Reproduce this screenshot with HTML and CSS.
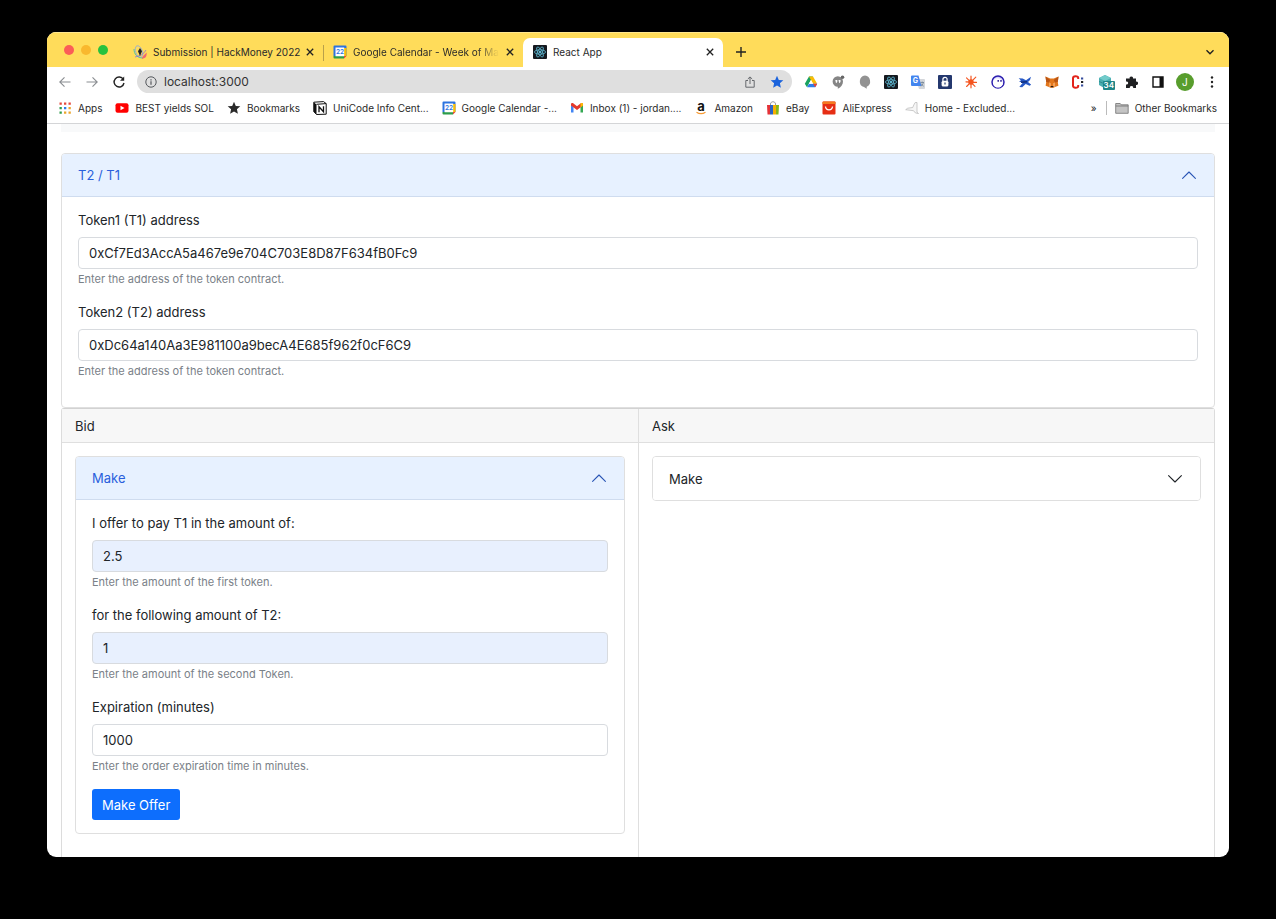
FILE: index.html
```
<!DOCTYPE html>
<html lang="en">
<head>
<meta charset="utf-8">
<title>React App</title>
<link rel="stylesheet" href="styles.css">
</head>
<body>
<svg class="defs" aria-hidden="true">
  <symbol id="close" viewBox="0 0 10 10"><path d="M1.8 1.8l6.4 6.4M8.2 1.8L1.8 8.2" stroke="#222" stroke-width="1.3" fill="none"/></symbol>
  <symbol id="react" viewBox="0 0 14 14">
    <rect width="14" height="14" rx="1" fill="#15191f"/>
    <g fill="none" stroke="#5fb9d3" stroke-width=".8"><ellipse cx="7" cy="7" rx="5.600" ry="2.200"/><ellipse cx="7" cy="7" rx="5.600" ry="2.200" transform="rotate(60 7 7)"/><ellipse cx="7" cy="7" rx="5.600" ry="2.200" transform="rotate(120 7 7)"/></g>
    <circle cx="7" cy="7" r="1.200" fill="#5fb9d3"/>
  </symbol>
  <symbol id="chevron" viewBox="0 0 16 16"><path d="M1.600 4.600L8 11l6.400-6.400" fill="none" stroke="currentColor" stroke-width="1.100" stroke-linecap="round" stroke-linejoin="round"/></symbol>
  <symbol id="star" viewBox="0 0 14 14"><path d="M7 .8l1.800 4.100 4.500.4-3.400 3 1 4.400L7 10.400l-3.900 2.300 1-4.400-3.400-3 4.500-.4z" fill="currentColor"/></symbol>
</svg>

<div class="window">
  <header class="tabstrip">
    <div class="lights"><button class="light red" aria-label="Close window"></button><button class="light amber" aria-label="Minimize"></button><button class="light green" aria-label="Zoom"></button></div>
    <div class="tab tab-first">
      <svg class="icon" viewBox="0 0 14 14"><g fill="none"><ellipse cx="6" cy="6.500" rx="3.300" ry="6" stroke="#8fa9dd" stroke-width=".8" transform="rotate(-20 6 6.500)"/><path d="M1 4c0 5 3 9 9 9" stroke="#5cc0a0" stroke-width="1"/><path d="M2 12c5-1 9-3 11-7" stroke="#8f6fd0" stroke-width=".8"/><path d="M9 13c2 0 4-1 4-4l-3 3" stroke="#f06a70" stroke-width="1.300"/></g><path d="M7 3l2 3.300L7 11 5 6.300z" fill="#222"/></svg>
      <span class="tab-title">Submission | HackMoney 2022</span>
      <button class="bare" aria-label="Close tab"><svg class="x"><use href="#close"/></svg></button>
    </div>
    <div class="tab tab-second">
      <svg class="icon" viewBox="0 0 14 14">
        <path d="M1.500 .5h11a1 1 0 0 1 1 1V11H.5V1.500a1 1 0 0 1 1-1z" fill="#2c73e0"/>
        <path d="M11 3h2.500v8H11z" fill="#fbbc04"/><path d="M.5 11H11v2.500H1.500a1 1 0 0 1-1-1z" fill="#2c9c4b"/>
        <path d="M11 11h2.500L11 13.500z" fill="#ea4335"/><path d="M2.500 2.500h8.700v8.700H2.500z" fill="#fff"/>
        <text x="7" y="9.300" text-anchor="middle" font-size="6.500" font-weight="600" fill="#2c73e0">22</text>
      </svg>
      <span class="tab-title fade">Google Calendar - Week of Ma</span>
      <button class="bare" aria-label="Close tab"><svg class="x"><use href="#close"/></svg></button>
    </div>
    <div class="tab tab-active">
      <svg class="icon"><use href="#react"/></svg>
      <span class="tab-title">React App</span>
      <button class="bare" aria-label="Close tab"><svg class="x"><use href="#close"/></svg></button>
    </div>
    <button class="bare new-tab" aria-label="New tab"><svg class="icon" viewBox="0 0 14 14"><path d="M7 2v10M2 7h10" stroke="#222" stroke-width="1.400"/></svg></button>
    <button class="bare tab-search" aria-label="Search tabs"><svg class="x" viewBox="0 0 10 10"><path d="M1.500 3.300L5 6.800l3.500-3.500" stroke="#222" stroke-width="1.400" fill="none"/></svg></button>
  </header>

  <div class="toolbar">
    <div class="nav">
      <button class="bare" aria-label="Back"><svg class="icon" viewBox="0 0 14 14"><path d="M12.500 7H2M6.500 2.300L1.800 7l4.700 4.700" stroke="#8a8d91" stroke-width="1.100" fill="none"/></svg></button>
      <button class="bare" aria-label="Forward"><svg class="icon" viewBox="0 0 14 14"><path d="M1.500 7H12M7.500 2.300L12.200 7l-4.700 4.700" stroke="#8a8d91" stroke-width="1.100" fill="none"/></svg></button>
      <button class="bare" aria-label="Reload"><svg class="icon" viewBox="0 0 14 14"><path d="M11.300 4.300A5 5 0 1 0 12 8" stroke="#222" stroke-width="1.400" fill="none"/><path d="M12.200 1.500v4.200H8z" fill="#222"/></svg></button>
    </div>
    <div class="omnibox">
      <svg class="info" viewBox="0 0 12 12"><circle cx="6" cy="6" r="5.200" fill="none" stroke="#55585c"/><path d="M6 5.300v3.400M6 3.200v1.200" stroke="#55585c" stroke-width="1.200"/></svg>
      <input class="url" type="text" aria-label="Address" value="localhost:3000">
      <button class="bare" aria-label="Share"><svg class="info" viewBox="0 0 12 12"><path d="M4 4.500H1.800v6.700h8.400V4.500H8M6 8V1M3.800 3L6 .9 8.200 3" fill="none" stroke="#66696d" stroke-width="1"/></svg></button>
      <button class="bare star-on" aria-label="Edit bookmark"><svg class="icon"><use href="#star"/></svg></button>
    </div>
    <div class="extensions">
      <button class="bare" aria-label="Drive"><svg class="icon" viewBox="0 0 14 14"><path d="M5 1.500h4L4.500 9.300 3 12.200.8 8.700z" fill="#1aa260"/><path d="M5 1.500h4l4.200 7.200H9z" fill="#fbbc04"/><path d="M3 12.200L5 8.700h8.200l-2 3.500z" fill="#2f7de9"/><path d="M7 5L4.900 8.700h4.200z" fill="#fff"/><path d="M13.200 8.700l-2 3.500-2.100-3.500z" fill="#ea4335"/></svg></button>
      <button class="bare" aria-label="Hangouts"><svg class="icon" viewBox="0 0 14 14"><path d="M6.800 1.300a5.200 5.200 0 0 0 0 10.400V13.700c3.200-1.500 5.200-4 5.200-7.200a5.200 5.200 0 0 0-5.200-5.200z" fill="#858585"/><path d="M4.300 5h2v1.900L5 8.200zm3.200 0h2v1.900L8.200 8.200z" fill="#fff"/><circle cx="11.500" cy="2.300" r="1.800" fill="#666"/></svg></button>
      <button class="bare" aria-label="Comments"><svg class="icon" viewBox="0 0 14 14"><path d="M7 .6a5.900 5.900 0 0 0-1 11.500l2.700 1.700v-2A5.900 5.900 0 0 0 7 .6z" fill="#929292"/></svg></button>
      <button class="bare" aria-label="React tools"><svg class="icon"><use href="#react"/></svg></button>
      <button class="bare" aria-label="Translate"><svg class="icon" viewBox="0 0 14 14"><path d="M5 4h8a1 1 0 0 1 1 1v8a1 1 0 0 1-1 1H8z" fill="#d3d6da"/><path d="M1 .5h6.500L10.500 11H1a1 1 0 0 1-1-1V1.500a1 1 0 0 1 1-1z" fill="#4385ef"/><path d="M9.500 7.500h3.500M11.200 6.500v1M12.400 7.500c-.5 2-1.500 3-2.600 3.700M10 8.500c.6 1.300 1.500 2 2.700 2.700" stroke="#66788a" stroke-width=".7" fill="none"/><text x="4.300" y="8.300" text-anchor="middle" font-size="7" font-weight="700" fill="#fff">G</text></svg></button>
      <button class="bare" aria-label="Password lock"><svg class="icon" viewBox="0 0 14 14"><rect width="14" height="14" rx="1" fill="#24386e"/><path d="M4.900 6V4.400a2.100 2.100 0 0 1 4.200 0V6" fill="none" stroke="#fff" stroke-width="1.200"/><rect x="3.600" y="5.700" width="6.800" height="5.800" rx="1.500" fill="#fff"/><path d="M7 7.500v2" stroke="#24386e" stroke-width="1.200"/></svg></button>
      <button class="bare" aria-label="Spark"><svg class="icon" viewBox="0 0 14 14"><g stroke="#f4551f" stroke-linecap="round"><path d="M7 1.200v11.600M2 6.800l10.500.6" stroke-width="1.200"/><path d="M2.500 2.800l8.500 8.500M11.800 2.200l-9.200 9.300" stroke-width="1.100"/></g><circle cx="7" cy="7" r="2.700" fill="#f4551f"/></svg></button>
      <button class="bare" aria-label="Ghost"><svg class="icon" viewBox="0 0 14 14"><circle cx="7" cy="7" r="6" fill="#d9d4ff" stroke="#2c1fae" stroke-width="1.500"/><path d="M2 8.500C1.500 5 4 3 7 3.200s5.300 3 4.800 6C11 11.500 9 12.600 7 12.600S2.500 11.500 2 8.500z" fill="#fff"/><path d="M7.200 5v1.800M10 5v1.800" stroke="#271b93" stroke-width="1.400"/></svg></button>
      <button class="bare" aria-label="Plane"><svg class="icon" viewBox="0 0 14 14"><path d="M.7 3.200l4 .3L8 5.300 13 1.700l-1 3.200-2 2 3.200 2.800-1.700 1L7.700 9l-3.500 3.300-2.900-.2L4.600 8 1 6.200l2-.8z" fill="#2758c5"/><path d="M3 7.200l6-.4" stroke="#102c79" stroke-width="1.500"/></svg></button>
      <button class="bare" aria-label="Fox wallet"><svg class="icon" viewBox="0 0 14 14"><path d="M.5 1.500l4.700 2h3.600l4.700-2-.7 5.500.6 3.700-3.400 1.300-1.300.8H5.300L4 12 .6 10.700 1.200 7z" fill="#e2761b"/><path d="M.5 1.500L5.200 5 4 7.500 1.200 7zm13 0L8.800 5 10 7.500l2.800-.5z" fill="#b85515"/><path d="M4 7.500l2 .8v3l-2 .7zm6 0l-2 .8v3l2 .7z" fill="#f4a25a"/><path d="M5.700 11h2.600v1.300H5.700z" fill="#2b1b12"/></svg></button>
      <button class="bare" aria-label="C tools"><svg class="icon" viewBox="0 0 14 14"><path d="M7.200 4V2.800C7.200.8 2 .8 2 3.300v7.400c0 2.500 5.200 2.500 5.200.5V10" fill="none" stroke="#e2231a" stroke-width="2"/><path d="M10 2.500h2.200v2H10zM10 9.500h2.200v2H10z" fill="#334b9b"/><path d="M10 6h2.200v2H10z" fill="#222"/></svg></button>
      <button class="bare badge-host" aria-label="Tracker, 34"><svg class="icon" viewBox="0 0 14 14"><path d="M7 0l6 3v7l-6 3.500L1 10V3z" fill="#49aeb1"/><path d="M1 3l6 3 6-3-6-3z" fill="#72cbca"/><path d="M1 6.500L7 9l6-2.500" stroke="#2e8b8e" fill="none"/></svg><span class="badge">34</span></button>
      <button class="bare" aria-label="Extensions"><svg class="icon" viewBox="0 0 14 14"><path d="M1 3.500h3.700a1.700 1.700 0 1 1 3.300 0h3v3.200a1.700 1.700 0 1 1 0 3.300v3H8.200a1.700 1.700 0 1 0-3.300 0H1V9.500a1.600 1.600 0 1 0 0-3z" fill="#1f2022"/></svg></button>
      <button class="bare" aria-label="Side panel"><svg class="icon" viewBox="0 0 14 14"><path d="M2 2h10v10H2z" fill="#fff" stroke="#111" stroke-width="1.400"/><path d="M8.500 2H12v10H8.500z" fill="#111"/></svg></button>
      <button class="bare" aria-label="Profile"><span class="avatar">J</span></button>
      <button class="bare" aria-label="Menu"><svg class="icon" viewBox="0 0 14 14"><g fill="#222"><circle cx="7" cy="2.500" r="1.200"/><circle cx="7" cy="7" r="1.200"/><circle cx="7" cy="11.500" r="1.200"/></g></svg></button>
    </div>
  </div>

  <nav class="bookmarks">
    <a href="#"><svg class="icon" viewBox="0 0 14 14"><g fill="#e5483b"><path d="M1.500 1.500h2.300v2.300H1.500zM6 1.500h2.300v2.300H6zM10.500 1.500h2.300v2.300h-2.300z"/></g><path d="M1.500 6h2.300v2.300H1.500zM1.500 10.500h2.300v2.300H1.500z" fill="#2c9c4b"/><path d="M6 6h2.300v2.300H6z" fill="#2f7de9"/><path d="M10.500 6h2.300v2.300h-2.300zM6 10.500h2.300v2.300H6zM10.500 10.500h2.300v2.300h-2.300z" fill="#eba52c"/></svg>Apps</a>
    <a href="#"><svg class="icon" viewBox="0 0 14 14"><rect x=".5" y="2.300" width="13" height="9.500" rx="2" fill="#f00"/><path d="M5.500 4.800L9.500 7l-4 2.200z" fill="#fff"/></svg>BEST yields SOL</a>
    <a href="#"><svg class="icon"><use href="#star"/></svg>Bookmarks</a>
    <a href="#"><svg class="icon" viewBox="0 0 14 14"><path d="M.8 1.200L10.500.6l2.700 2v10.600L3.500 13.500.8 10.600z" fill="#fff" stroke="#111"/><path d="M.8 1.200l2.700 2.200v10L.8 10.600z" fill="#111"/><path d="M3.500 3.300l9.700-.7" stroke="#111"/><path d="M6 11.300V5.700l4.500 5V5.300" fill="none" stroke="#111" stroke-width="1.300"/></svg>UniCode Info Cent...</a>
    <a href="#"><svg class="icon" viewBox="0 0 14 14">
        <path d="M1.500 .5h11a1 1 0 0 1 1 1V11H.5V1.500a1 1 0 0 1 1-1z" fill="#2c73e0"/>
        <path d="M11 3h2.500v8H11z" fill="#fbbc04"/><path d="M.5 11H11v2.500H1.500a1 1 0 0 1-1-1z" fill="#2c9c4b"/>
        <path d="M11 11h2.500L11 13.500z" fill="#ea4335"/><path d="M2.500 2.500h8.700v8.700H2.500z" fill="#fff"/>
        <text x="7" y="9.300" text-anchor="middle" font-size="6.500" font-weight="600" fill="#2c73e0">22</text>
      </svg>Google Calendar -...</a>
    <a href="#"><svg class="icon" viewBox="0 0 14 14"><path d="M1 3.500v8h2.500V6z" fill="#4285f4"/><path d="M13 3.500v8h-2.500V6z" fill="#34a853"/><path d="M1 3.200C1 2 2.500 1.700 3.500 2.500L7 5.300l3.500-2.800C11.500 1.700 13 2 13 3.200v1.300L7 9 1 4.500z" fill="#e5392c"/><path d="M10.500 2.500C11.500 1.700 13 2 13 3.200v1.300l-2.500 2z" fill="#fbbc04"/></svg>Inbox (1) - jordan....</a>
    <a href="#"><svg class="icon amazon" viewBox="0 0 14 14"><text x="7" y="10" text-anchor="middle" font-size="13" font-weight="700" fill="#111">a</text><path d="M2.500 11.300c3 1.900 6 1.900 9 0" fill="none" stroke="#f79b34" stroke-width="1.200"/></svg>Amazon</a>
    <a href="#"><svg class="icon" viewBox="0 0 14 14"><path d="M4.500 5V3c0-3 5-3 5 0v2" fill="none" stroke="#999"/><path d="M1 4h3v9.500H1.500z" fill="#e53238"/><path d="M4 4h3v9.500H4z" fill="#2a62c4"/><path d="M7 4h3v9.500H7z" fill="#f5af02"/><path d="M10 4h3l-.5 9.500H10z" fill="#86b817"/></svg>eBay</a>
    <a href="#"><svg class="icon" viewBox="0 0 14 14"><rect x=".5" y=".5" width="13" height="13" rx="1" fill="#e62e14"/><path d="M.5 1.500a1 1 0 0 1 1-1h11a1 1 0 0 1 1 1V3H.5z" fill="#f47a20"/><path d="M3.500 5.500c.5 4.500 6.500 4.500 7 0" fill="none" stroke="#fff" stroke-width="1.300"/></svg>AliExpress</a>
    <a href="#"><svg class="icon" viewBox="0 0 14 14"><path d="M.7 8.700l2-1.500 5-.7L9 3.500l1.200-2H12v9.800l1.500 1.200-3-.5-2-2.300z" fill="#f6f6f6" stroke="#b4b4b4" stroke-width=".7"/></svg>Home - Excluded...</a>
    <button class="bare more" aria-label="More bookmarks">»</button>
    <a class="other" href="#"><svg class="icon" viewBox="0 0 14 14"><path d="M.7 2.500h4.500l1 1.300h7v8.500H.7z" fill="#c4c4c4" stroke="#707070" stroke-width=".8"/><path d="M.7 5h12.500" stroke="#707070" stroke-width=".8"/></svg>Other Bookmarks</a>
  </nav>

  <main class="page">
    <div class="strip"></div>
    <section class="accordion">
      <button class="acc-head open" aria-expanded="true">T2 / T1<svg class="chev"><use href="#chevron"/></svg></button>
      <form class="acc-body">
        <div class="field"><label for="t1">Token1 (T1) address</label><input id="t1" type="text" value="0xCf7Ed3AccA5a467e9e704C703E8D87F634fB0Fc9"><small>Enter the address of the token contract.</small></div>
        <div class="field"><label for="t2">Token2 (T2) address</label><input id="t2" type="text" value="0xDc64a140Aa3E981100a9becA4E685f962f0cF6C9"><small>Enter the address of the token contract.</small></div>
      </form>
    </section>
    <div class="cards">
      <section class="card">
        <h2>Bid</h2>
        <div class="card-body">
          <div class="accordion">
            <button class="acc-head open" aria-expanded="true">Make<svg class="chev"><use href="#chevron"/></svg></button>
            <form class="acc-body">
              <div class="field"><label for="pay">I offer to pay T1 in the amount of:</label><input id="pay" class="filled" type="text" value="2.5"><small>Enter the amount of the first token.</small></div>
              <div class="field"><label for="get">for the following amount of T2:</label><input id="get" class="filled" type="text" value="1"><small>Enter the amount of the second Token.</small></div>
              <div class="field"><label for="exp">Expiration (minutes)</label><input id="exp" type="text" value="1000"><small>Enter the order expiration time in minutes.</small></div>
              <button class="primary" type="button">Make Offer</button>
            </form>
          </div>
        </div>
      </section>
      <section class="card">
        <h2>Ask</h2>
        <div class="card-body">
          <div class="accordion">
            <button class="acc-head" aria-expanded="false">Make<svg class="chev"><use href="#chevron"/></svg></button>
          </div>
        </div>
      </section>
    </div>
  </main>
</div>
</body>
</html>
```
FILE: styles.css
```
* { box-sizing: border-box; }
body {
  margin: 0;
  min-height: 100vh;
  padding: 32px 47px 62px;
  display: flex;
  background: #000;
  color: #212529;
  font-family: Inter, "Liberation Sans", sans-serif;
  font-size: 13px;
}
button, input { font: inherit; color: inherit; }
svg { display: block; flex: none; }
.defs { position: absolute; width: 0; height: 0; }
.window {
  flex: 1;
  min-width: 0;
  display: flex;
  flex-direction: column;
  background: #fff;
  border-radius: 9px;
  overflow: hidden;
}
.bare { border: 0; padding: 0; background: none; display: flex; align-items: center; justify-content: center; }
.icon { width: 14px; height: 14px; }
.x { width: 10px; height: 10px; }
.amazon { overflow: visible; }

.tabstrip { height: 35px; display: flex; align-items: stretch; background: #ffdc5a; font-size: 10px; border-top: 1px solid #ffe78f; }
.lights { display: flex; align-items: center; gap: 7px; padding-left: 17px; width: 86px; }
.light { width: 10px; height: 10px; border: 0; padding: 0; border-radius: 50%; }
.red { background: #fb5d57; }
.amber { background: #f9b82e; }
.green { background: #27c23e; }
.tab { display: flex; align-items: center; gap: 6px; margin-top: 5px; padding: 0 8px 2px 0; color: #2a2a2a; }
.tab-title { flex: 1; min-width: 0; white-space: nowrap; }
.tab-first { width: 190px; }
.tab-second { width: 200px; padding-left: 10px; position: relative; }
.tab-second::before { content: ""; position: absolute; left: 0; top: 7px; width: 1px; height: 16px; background: #b9a04a; }
.fade { -webkit-mask-image: linear-gradient(to right, #000 85%, transparent); mask-image: linear-gradient(to right, #000 85%, transparent); }
.tab-active { width: 200px; padding-left: 10px; background: #fff; border-radius: 7px 7px 0 0; }
.new-tab { margin: 5px 0 0 11px; padding-bottom: 2px; }
.tab-search { margin: 5px 14px 0 auto; padding-bottom: 2px; }

.toolbar { height: 29px; display: flex; align-items: center; padding: 0 4px 0 11px; }
.nav { display: flex; gap: 13px; width: 79px; }
.omnibox { flex: 1; min-width: 0; height: 23px; display: flex; align-items: center; gap: 7px; padding: 0 8px; border-radius: 12px; background: #dfdfdf; }
.info { width: 12px; height: 12px; }
.url { flex: 1; min-width: 0; border: 0; padding: 0; background: none; font-size: 12px; color: #333; }
.star-on { color: #1b63dc; margin-left: 7px; }
.extensions { flex: none; width: 427px; margin-left: 6px; display: flex; align-items: center; }
.extensions > * { flex: 1; }
.badge-host { position: relative; }
.badge { position: absolute; left: 11px; top: 6px; padding: 0 1px; border-radius: 1px; background: #1d8587; color: #fff; font-size: 8px; line-height: 9px; font-weight: 600; }
.avatar { width: 18px; height: 18px; border-radius: 50%; background: #589d2d; color: #fff; font-size: 10px; line-height: 18px; }

.bookmarks { height: 28px; display: flex; align-items: center; gap: 13px; padding: 0 12px 4px 11px; border-bottom: 1px solid #d4d5d7; font-size: 10px; }
.bookmarks a { display: flex; align-items: center; gap: 6px; color: #2a2a2a; text-decoration: none; white-space: nowrap; }
.more { margin-left: auto; margin-right: -4px; }
.bookmarks .other { border-left: 1px solid #bbb; padding-left: 8px; height: 14px; }

.page { flex: 1; display: flex; flex-direction: column; padding: 0 14px; }
.strip { height: 8px; margin-bottom: 21px; background: #f8f9fa; }
.accordion { border: 1px solid #dfdfdf; border-radius: 4px; background: #fff; overflow: hidden; }
.acc-head { width: 100%; height: 43px; display: flex; align-items: center; justify-content: space-between; padding: 0 17px 0 16px; border: 0; background: #fff; text-align: left; }
.open { color: #2a5fdc; background: #e7f1ff; border-bottom: 1px solid #cfdcef; }
.chev { width: 16px; height: 16px; color: #212529; }
.open .chev { transform: rotate(180deg); color: #2a55b5; }
.acc-body { padding: 13px 16px; }
.field { display: flex; flex-direction: column; margin-bottom: 14px; }
.field label { line-height: 20px; margin-bottom: 7px; }
.field input { height: 32px; padding: 0 10px; border: 1px solid #d8dbdf; border-radius: 4px; background: #fff; }
.field .filled { background: #e8f0fe; }
.field small { margin-top: 1px; font-size: 11px; line-height: 18px; color: #7a8188; }
.primary { height: 31px; padding: 0 10px; border: 0; border-radius: 3px; background: #0d6efd; color: #fff; }

.cards { flex: 1; display: grid; grid-template-columns: 1fr 1fr; border: 1px solid #dcdcdc; border-top-color: #d2d2d2; border-bottom: 0; border-radius: 3px 3px 0 0; }
.card + .card { border-left: 1px solid #dfdfdf; }
.card h2 { margin: 0; height: 34px; padding: 0 13px; line-height: 34px; font-size: 13px; font-weight: 400; background: #f7f7f7; border-bottom: 1px solid #dfdfdf; }
.card-body { padding: 13px 13px 22px; }
```
